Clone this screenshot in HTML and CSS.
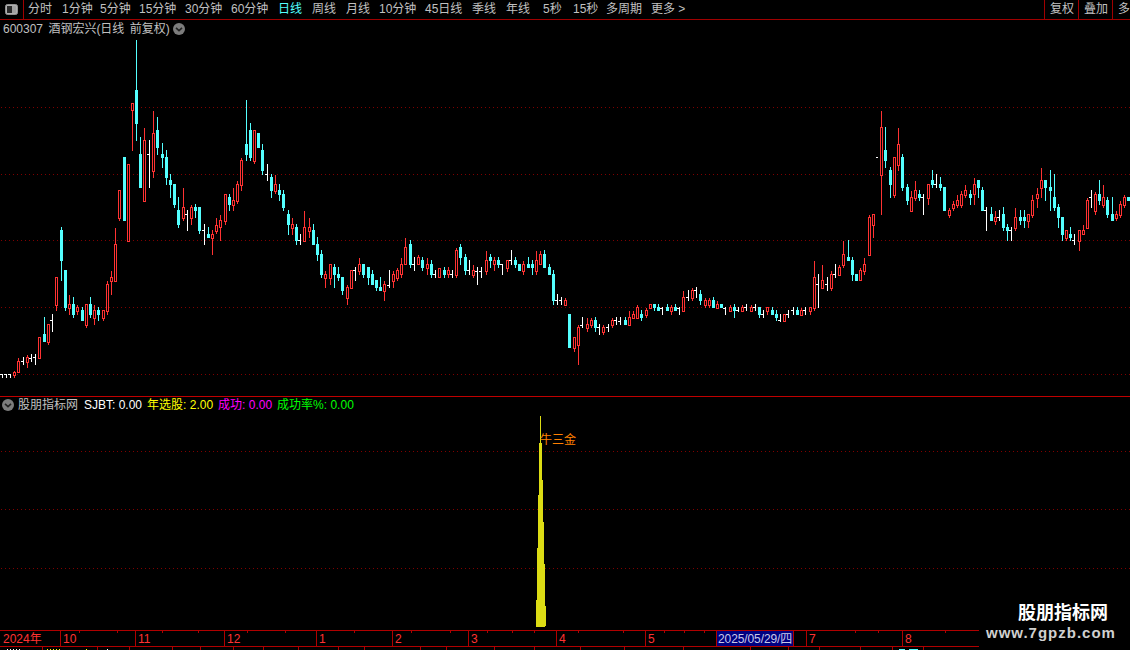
FILE: index.html
```html
<!DOCTYPE html>
<html lang="zh-CN">
<head>
<meta charset="utf-8">
<title>600307 酒钢宏兴</title>
<link rel="stylesheet" href="styles.css">
</head>
<body>
<div class="app">
  <header class="topbar">
    <div class="layout-btn">
      <svg width="13" height="11" viewBox="0 0 13 11"><rect class="ico-frame" x="0.5" y="0.5" width="12" height="10" rx="2"/><rect class="ico-dark" x="2" y="2" width="5" height="7"/><rect class="ico-light" x="7" y="2" width="4" height="7"/></svg>
    </div>
    <nav class="tabs">
      <span>分时</span><span>1分钟</span><span>5分钟</span><span>15分钟</span><span>30分钟</span><span>60分钟</span><span class="active">日线</span><span>周线</span><span>月线</span><span>10分钟</span><span>45日线</span><span>季线</span><span>年线</span><span>5秒</span><span>15秒</span><span>多周期</span><span>更多 &gt;</span>
    </nav>
    <div class="side-btn">复权</div>
    <div class="side-btn">叠加</div>
    <div class="side-btn last">多</div>
  </header>

  <section class="main-panel">
    <svg id="kline" class="chart" viewBox="0 20 1130 376" width="1130" height="376"></svg>
    <div class="main-title">
      <span class="title-text">600307 酒钢宏兴(日线 前复权)</span>
      <svg class="chev" width="12" height="12" viewBox="0 0 12 12"><circle class="chev-bg" cx="6" cy="6" r="6"/><path class="chev-line" d="M3 4.8 6 7.6 9 4.8"/></svg>
    </div>
  </section>

  <section class="sub-panel">
    <svg id="indicator" class="chart" viewBox="0 397 1130 233" width="1130" height="233"></svg>
    <div class="sub-title">
      <svg class="chev" width="12" height="12" viewBox="0 0 12 12"><circle class="chev-bg" cx="6" cy="6" r="6"/><path class="chev-line" d="M3 4.8 6 7.6 9 4.8"/></svg>
      <span class="grey">股朋指标网</span>
      <span class="white">SJBT: 0.00</span>
      <span class="yellow">年选股: 2.00</span>
      <span class="magenta">成功: 0.00</span>
      <span class="green">成功率%: 0.00</span>
    </div>
    <div class="signal">牛三金</div>
  </section>

  <footer class="axis">
    <div class="seg s60">2024年</div>
    <div class="seg s75">10</div>
    <div class="seg s89">11</div>
    <div class="seg s92">12</div>
    <div class="seg s76">1</div>
    <div class="seg s76">2</div>
    <div class="seg s88">3</div>
    <div class="seg s89">4</div>
    <div class="seg s71">5</div>
    <div class="seg date">2025/05/29/四</div>
    <div class="seg s13"></div>
    <div class="seg s96">7</div>
    <div class="seg s76 end">8</div>
  </footer>
  <div id="statusbar" class="status"></div>

  <div class="watermark">
    <div class="wm-name">股朋指标网</div>
    <div class="wm-url">www.7gpzb.com</div>
  </div>
</div>
<script src="chart.js"></script>
</body>
</html>
```
FILE: styles.css
```css
* { box-sizing: border-box; }
html, body { margin: 0; padding: 0; background: #000; }
.app {
  position: relative;
  display: flex;
  flex-direction: column;
  width: 1130px;
  height: 650px;
  overflow: hidden;
  background: #000;
  color: #c0c0c0;
  font: 12px/16px "Liberation Sans", "Noto Sans CJK SC", sans-serif;
}
.topbar {
  display: flex;
  flex: none;
  height: 20px;
  border-bottom: 1px solid #a00000;
}
.layout-btn {
  display: flex;
  align-items: center;
  justify-content: center;
  width: 24px;
  padding-bottom: 1px;
  border-right: 1px solid #a00000;
}
.ico-frame { fill: #b0b0b0; stroke: #909090; }
.ico-dark { fill: #2a2a2a; }
.ico-light { fill: #a0a0a0; }
.tabs {
  display: grid;
  flex: 1;
  grid-template-columns: 34px 38px 39px 46px 46px 47px 34px 34px 33px 46px 47px 34px 37px 30px 33px 45px auto;
  padding-left: 4px;
  line-height: 19px;
  white-space: nowrap;
}
.tabs .active { color: #54ffff; }
.side-btn {
  width: 34px;
  padding-left: 5px;
  border-left: 1px solid #a00000;
  line-height: 19px;
  white-space: nowrap;
  overflow: hidden;
}
.side-btn.last { width: 18px; }
.main-panel {
  position: relative;
  flex: none;
  height: 376px;
}
.chart { display: block; shape-rendering: crispEdges; }
.main-title {
  position: absolute;
  left: 3px;
  top: 1px;
  display: flex;
  align-items: center;
  gap: 3px;
  white-space: nowrap;
}
.title-text { word-spacing: 2px; }
.chev-bg { fill: #7c7c7c; }
.chev-line { fill: none; stroke: #222; stroke-width: 1.6; }
.chev { flex: none; }
.sub-panel {
  position: relative;
  flex: none;
  height: 234px;
  border-top: 1px solid #c00000;
}
.sub-title {
  position: absolute;
  left: 2px;
  top: 0;
  display: flex;
  align-items: center;
  height: 16px;
  gap: 5px;
  white-space: nowrap;
}
.sub-title .grey { margin-left: -1px; }
.sub-title .white { margin-left: 1px; }
.white { color: #fff; }
.yellow { color: #ff0; }
.magenta { color: #f0f; }
.green { color: #0f0; }
.signal {
  position: absolute;
  left: 540px;
  top: 35px;
  color: #ff8000;
  white-space: nowrap;
}
.grid { stroke: #800000; stroke-width: 1; stroke-dasharray: 1 3; }
.k-r { fill: #ff3232; }
.k-c { fill: #54ffff; }
.k-w { fill: #fff; }
.k-hollow { fill: #000; stroke: #ff3232; stroke-width: 1; }
.spike { fill: #dcdc14; }
.axis {
  position: relative;
  display: flex;
  flex: none;
  width: 979px;
  height: 17px;
  border-top: 1px solid #b00000;
  border-bottom: 1px solid #b00000;
  color: #ff3232;
}
.seg {
  flex: none;
  height: 15px;
  padding-left: 2px;
  border-right: 1px solid #b00000;
  line-height: 16px;
  white-space: nowrap;
}
.seg:first-child { padding-left: 3px; }
.s13 { width: 13px; }
.s60 { width: 61px; }
.s71 { width: 71px; }
.s75 { width: 75px; }
.s76 { width: 76px; }
.s88 { width: 88px; }
.s89 { width: 89px; }
.s92 { width: 92px; }
.s96 { width: 96px; }
.seg.date {
  width: 77px;
  padding-left: 1px;
  background: #000080;
  color: #c8c8e8;
  letter-spacing: -0.1px;
}
.seg.end { border-right: none; }
.tick { position: absolute; top: 0; width: 1px; height: 2px; background: #b00000; }
.status {
  position: relative;
  flex: 1;
}
.status-sep { position: absolute; top: 0; width: 1px; height: 3px; background: #b00000; }
.sliver {
  position: absolute;
  top: 2px;
  height: 1px;
  background: repeating-linear-gradient(90deg, #fff 0 1px, transparent 1px 3px);
}
.sliver.y { background: repeating-linear-gradient(90deg, #ff0 0 1px, transparent 1px 3px); }
.sliver.c { background: #54ffff; }
.watermark {
  position: absolute;
  left: 984px;
  top: 599px;
  width: 146px;
  height: 51px;
  background: #000;
}
.wm-name {
  padding-left: 34px;
  color: #fff;
  font: bold 18px/24px "Noto Sans CJK SC", sans-serif;
  white-space: nowrap;
}
.wm-url {
  padding-left: 2px;
  color: #d0d0d0;
  font: bold 15px/20px "Liberation Sans", sans-serif;
  letter-spacing: 1px;
  white-space: nowrap;
}
```
FILE: chart.js
```js
(function () {
var NS = "http://www.w3.org/2000/svg";
// type x high bodyTop bodyBottom low; w = x top bottom tickY
var DATA = "w 2 374 377 374|w 6 374 377 374|w 10 374 377 374|r 14 371 372 375 377|r 18 358 361 372 372|w 23 357 364 361|r 27 355 357 362 367|w 31 354 361 358|w 35 354 364 357|r 39 337 337 358 358|c 44 317 334 341 341|r 48 324 324 342 344|w 52 314 331 320|r 56 277 277 305 310|c 61 227 230 260 280|c 65 270 270 307 310|r 69 295 304 308 314|c 73 297 304 314 317|r 77 305 307 311 314|c 82 307 310 320 320|r 86 304 304 325 327|c 90 297 304 314 317|r 94 305 310 318 324|c 98 307 310 314 320|r 103 310 310 318 320|r 107 281 284 311 314|r 111 271 277 281 294|r 115 228 244 281 281|r 119 190 190 218 220|c 124 157 157 220 220|r 128 164 164 241 241|r 132 103 103 110 150|c 136 40 90 123 140|c 140 137 154 187 187|r 144 128 140 201 201|w 149 140 187 154|r 153 111 133 171 177|c 157 117 130 147 154|c 162 143 154 157 167|c 166 150 157 177 184|c 170 174 180 184 197|c 174 184 184 204 207|c 178 197 210 224 227|r 183 188 207 218 220|w 187 210 230 214|r 191 205 207 218 224|c 195 204 207 210 217|c 199 207 207 230 233|w 204 224 244 230|c 208 227 234 237 237|r 212 230 234 238 254|r 216 218 225 231 233|r 220 215 220 227 240|r 225 194 194 221 224|c 229 194 197 204 210|r 233 188 200 205 210|r 237 181 184 201 203|r 241 158 160 185 190|c 246 100 144 154 160|c 250 123 130 157 160|r 254 130 130 161 163|c 258 133 133 147 147|c 262 144 150 170 174|w 267 164 180 174|c 271 174 177 190 197|r 275 175 184 191 193|c 279 184 190 194 200|c 283 190 194 207 210|c 288 210 214 224 234|r 292 218 224 228 234|c 296 224 227 240 244|w 300 234 244 240|r 304 211 227 241 241|r 309 218 227 231 237|c 313 224 230 244 244|c 317 237 244 254 260|c 321 250 254 274 277|r 325 271 274 278 287|r 330 264 264 278 284|c 334 264 267 274 287|c 338 267 274 277 280|c 342 277 277 290 294|r 347 285 287 298 304|r 351 270 270 288 288|w 355 267 280 270|r 359 258 264 271 274|c 363 264 264 274 277|c 368 267 267 277 284|c 372 270 274 284 284|c 376 280 280 287 290|c 380 277 287 290 290|r 384 281 284 291 300|w 389 270 287 285|r 393 271 274 281 287|r 397 268 270 278 280|r 401 258 264 274 277|r 405 238 247 264 264|c 410 240 244 264 267|w 414 257 270 264|r 418 255 257 264 264|c 422 257 260 267 270|r 427 258 264 268 274|c 431 260 264 274 277|w 435 270 277 274|r 439 268 268 277 277|c 444 267 270 274 277|r 448 267 270 274 277|w 452 270 277 274|r 456 248 250 275 277|c 460 244 247 257 264|c 465 254 257 270 274|w 469 260 274 270|r 473 265 270 275 277|w 477 267 284 271|w 481 267 277 271|r 486 251 260 271 274|c 490 254 257 260 267|r 494 257 260 264 270|c 498 257 260 264 267|w 502 264 274 264|r 507 260 260 268 271|w 511 250 264 260|c 515 257 260 264 267|c 519 264 264 270 270|r 523 261 264 271 274|c 528 257 264 267 267|c 532 260 264 267 274|r 536 251 260 271 274|r 540 251 254 264 264|c 544 250 254 267 267|c 549 264 267 274 274|c 553 270 274 300 304|w 557 294 304 300|w 561 297 304 300|r 565 298 300 305 305|c 569 314 314 347 347|r 574 337 337 348 351|r 578 325 327 345 364|w 582 317 327 325|r 587 318 324 328 331|r 591 318 320 325 327|c 595 317 320 327 331|w 599 324 334 327|r 603 325 327 332 334|w 608 324 331 327|r 612 318 320 325 327|w 616 317 324 320|w 620 317 324 321|c 625 317 320 324 324|r 629 311 317 325 325|r 633 311 314 318 318|r 637 305 307 318 318|c 641 310 314 317 320|r 646 308 310 315 317|r 650 304 304 308 308|c 654 304 304 307 310|c 658 304 307 310 310|w 662 307 314 308|c 667 304 307 310 310|r 671 305 307 311 314|c 675 304 307 310 310|w 679 307 314 308|r 683 291 297 311 311|w 688 290 300 297|r 692 288 290 298 300|w 696 287 297 290|c 700 290 294 300 304|r 705 298 300 305 307|r 709 298 300 305 307|c 713 297 300 307 307|r 717 301 304 308 308|c 721 304 304 307 307|w 725 307 314 308|r 730 305 307 311 311|c 734 304 307 310 317|w 738 307 311 310|r 742 305 307 311 311|w 746 304 310 307|r 751 305 307 311 311|w 755 304 310 307|c 759 307 307 314 317|w 763 310 317 314|r 767 307 307 311 314|c 772 307 310 314 314|c 776 310 314 317 320|w 780 314 321 320|r 784 314 314 321 321|w 788 310 317 314|w 793 307 314 310|c 797 307 310 314 314|r 801 308 310 315 315|w 805 307 314 310|r 810 307 307 311 314|r 814 261 277 308 310|w 818 274 307 284|r 822 265 280 288 288|w 827 277 290 284|r 831 271 274 288 290|w 835 264 277 274|r 839 265 267 275 275|r 843 241 254 265 267|c 848 240 257 260 260|c 852 257 260 274 280|c 856 274 274 280 280|r 860 268 270 280 280|r 864 258 264 271 274|r 869 215 217 255 255|r 873 214 214 225 237|w 878 157 157 157|r 881 111 127 175 214|c 885 127 150 160 167|c 890 167 170 184 197|r 894 157 157 195 197|r 898 128 144 165 170|c 902 154 157 187 190|c 907 184 187 200 204|r 911 191 197 211 211|r 915 181 190 198 200|c 919 190 194 197 200|w 923 194 214 197|r 928 184 184 198 204|c 932 170 180 184 187|w 936 174 187 184|c 940 177 184 187 190|c 944 187 187 210 210|r 949 208 210 215 217|r 953 201 204 208 210|r 957 195 200 205 207|r 961 191 194 205 207|r 965 185 190 195 197|c 970 190 194 197 204|r 974 178 184 194 204|c 978 180 180 187 197|c 982 187 190 210 210|w 986 207 230 210|c 991 207 214 220 220|r 995 211 217 221 224|w 999 210 220 217|c 1003 207 214 227 230|c 1007 224 227 230 240|w 1011 227 240 230|r 1015 208 217 228 230|c 1020 210 217 220 224|c 1024 210 217 220 227|r 1028 214 214 221 227|r 1032 195 200 215 217|r 1037 188 194 198 207|r 1041 168 180 188 197|c 1045 180 180 187 200|c 1050 170 187 190 210|c 1054 174 197 207 210|c 1058 204 207 217 227|c 1062 217 217 234 240|r 1066 230 230 238 240|c 1070 227 234 237 240|w 1074 234 244 240|r 1079 230 230 241 250|r 1083 225 230 234 234|r 1087 198 200 228 228|w 1091 190 207 197|r 1095 192 194 211 214|c 1099 180 194 200 204|r 1103 185 197 205 207|c 1107 197 200 214 217|c 1112 197 214 220 220|r 1116 211 214 218 220|r 1120 201 204 215 217|r 1124 195 197 205 207|c 1128 197 197 200 200";

function el(name, attrs) {
  var n = document.createElementNS(NS, name);
  for (var k in attrs) n.setAttribute(k, attrs[k]);
  return n;
}
function rect(svg, cls, x, y, w, h) {
  svg.appendChild(el("rect", { "class": cls, x: x, y: y, width: w, height: h }));
}
function grid(svg, y) {
  svg.appendChild(el("line", { "class": "grid", x1: 1, x2: 1130, y1: y + 0.5, y2: y + 0.5 }));
}

var kline = document.getElementById("kline");
[107, 174, 240, 307, 374].forEach(function (y) { grid(kline, y); });
DATA.split("|").forEach(function (row) {
  var p = row.split(" "), t = p[0];
  var v = p.slice(1).map(Number), x = v[0];
  if (t === "w") {
    if (v[2] > v[1]) rect(kline, "k-w", x, v[1], 1, v[2] - v[1] + 1);
    rect(kline, "k-w", x - 2, v[3], 2, 1);
    return;
  }
  var cls = t === "r" ? "k-r" : "k-c";
  rect(kline, cls, x, v[1], 1, v[4] - v[1] + 1);
  if (t === "r") {
    kline.appendChild(el("rect", { "class": "k-hollow", x: x - 0.5, y: v[2] + 0.5, width: 2, height: Math.max(v[3] - v[2], 1) }));
  } else {
    rect(kline, cls, x - 1, v[2], 3, v[3] - v[2] + 1);
  }
});

var ind = document.getElementById("indicator");
[451, 509, 568].forEach(function (y) { grid(ind, y); });
ind.appendChild(el("path", {
  "class": "spike",
  d: "M540 416H541V443H542V480H543V522H544V564H545V606H546V626H545V627H536V600H537V548H538V495H539V443H540Z"
}));

var axis = document.querySelector(".axis");
[79, 117, 162, 198, 247, 285, 354, 411, 450, 487, 512, 534, 578, 623, 664, 684, 704, 855, 878, 945].forEach(function (x) {
  var t = document.createElement("i");
  t.className = "tick";
  t.style.left = x + "px";
  axis.appendChild(t);
});

var bar = document.getElementById("statusbar");
[42, 97, 129, 172, 200, 233, 263, 298, 338, 364, 420, 446, 494, 534, 580, 624, 683, 750, 788, 819, 860, 892, 923].forEach(function (x) {
  var s = document.createElement("i");
  s.className = "status-sep";
  s.style.left = x + "px";
  bar.appendChild(s);
});
[[7, 13, ""], [47, 14, "y"], [86, 2, "y"], [107, 2, ""], [899, 6, "c"], [909, 9, "c"]].forEach(function (d) {
  var s = document.createElement("i");
  s.className = "sliver " + d[2];
  s.style.left = d[0] + "px";
  s.style.width = d[1] + "px";
  bar.appendChild(s);
});
})();
```
